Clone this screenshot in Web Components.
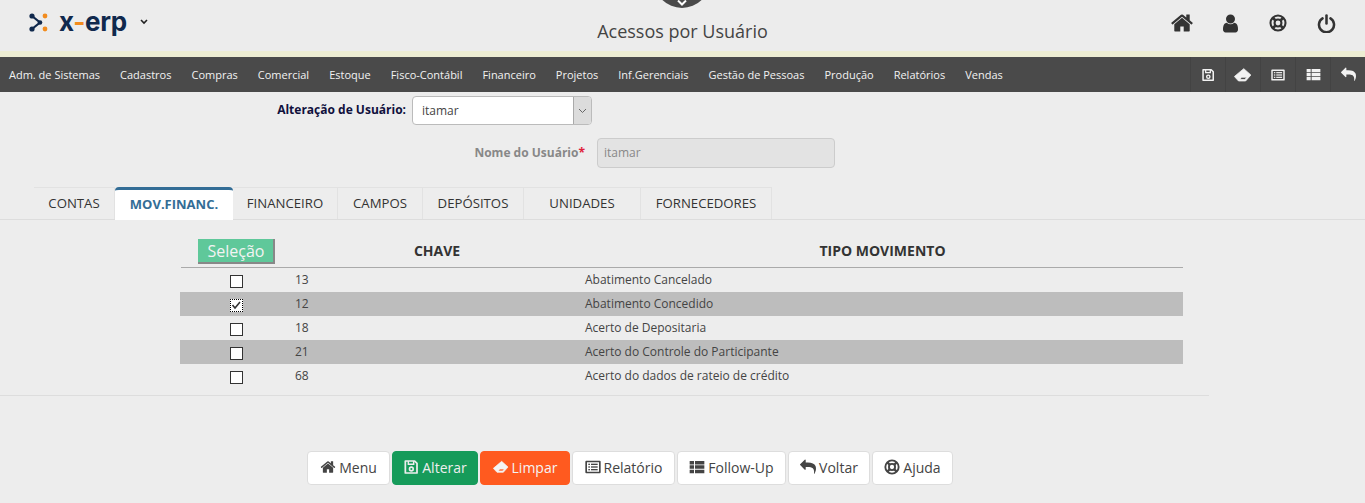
<!DOCTYPE html>
<html lang="pt-BR">
<head>
<meta charset="utf-8">
<title>Acessos por Usuário</title>
<style>
    html, body {
        margin: 0;
        padding: 0;
        background: #ededed;
        font-family: "Open Sans", "Liberation Sans", sans-serif;
        color: #444;
    }
</style>
</head>
<body>
<erp-header title-text="Acessos por Usuário"></erp-header>
<erp-menubar></erp-menubar>
<erp-form></erp-form>
<erp-tabs></erp-tabs>
<erp-grid></erp-grid>
<erp-actions></erp-actions>

<script>
const ICONS = {
    home: '<svg viewBox="0 0 1664 1792"><path fill="currentColor" d="M1408 992v480q0 26-19 45t-45 19h-384v-384h-256v384h-384q-26 0-45-19t-19-45v-480q0-1 .5-3t.5-3l575-474 575 474q1 2 1 6zm223-69l-62 74q-8 9-21 11h-3q-13 0-21-7l-692-577-692 577q-12 8-24 7-13-2-21-11l-62-74q-8-10-7-23.500t11-21.500l719-599q32-26 76-26t76 26l244 204v-195q0-14 9-23t23-9h192q14 0 23 9t9 23v408l219 182q10 8 11 21.500t-7 23.500z"/></svg>',
    user: '<svg viewBox="0 0 1792 1792"><path fill="currentColor" d="M1536 1399q0 109-62.500 187t-150.500 78h-854q-88 0-150.500-78t-62.500-187q0-85 8.500-160.500t31.500-152 58.500-131 94-89 134.500-34.500q131 128 313 128t313-128q76 0 134.500 34.500t94 89 58.500 131 31.500 152 8.500 160.500zm-256-887q0 159-112.500 271.500t-271.500 112.500-271.500-112.500-112.500-271.500 112.500-271.500 271.500-112.500 271.500 112.500 112.500 271.500z"/></svg>',
    ring: '<svg viewBox="0 0 24 24" fill="none" stroke="currentColor"><circle cx="12" cy="12" r="10" stroke-width="2.8"/><circle cx="12" cy="12" r="4.6" stroke-width="2.8"/><path stroke-width="3.600" d="M5 5l4 4M19 5l-4 4M5 19l4-4M19 19l-4-4"/></svg>',
    power: '<svg viewBox="0 0 24 24" fill="none" stroke="currentColor" stroke-width="3.200" stroke-linecap="round"><path d="M7 5.500a9.500 9.500 0 1 0 10 0"/><path d="M12 2v10"/></svg>',
    save: '<svg viewBox="0 0 24 24" fill="none" stroke="currentColor" stroke-width="2.600"><path d="M3.500 3h14l3.500 3.500v14.500h-17.500z" stroke-linejoin="round"/><path d="M8 3v5h8v-5" stroke-width="2.200"/><circle cx="12.500" cy="15" r="2.800" stroke-width="2.400"/></svg>',
    eraser: '<svg viewBox="0 0 24 24"><path fill="currentColor" fill-rule="evenodd" stroke="currentColor" stroke-width="1" stroke-linejoin="round" d="M13 3.500l9.500 8.500-7 8h-9.500l-5.500-6zM10 15l-2 3h6.500l2.500-3z"/></svg>',
    list: '<svg viewBox="0 0 24 24" fill="currentColor"><path fill-rule="evenodd" d="M2 2.500h20a1.500 1.500 0 0 1 1.500 1.500v16a1.500 1.500 0 0 1-1.500 1.500h-20a1.500 1.500 0 0 1-1.500-1.500v-16a1.500 1.500 0 0 1 1.500-1.500zM3 5v14h18v-14z"/><rect x="5" y="7" width="2.400" height="2"/><rect x="5" y="11" width="2.400" height="2"/><rect x="5" y="15" width="2.400" height="2"/><rect x="9" y="7" width="10" height="2"/><rect x="9" y="11" width="10" height="2"/><rect x="9" y="15" width="10" height="2"/></svg>',
    table: '<svg viewBox="0 0 24 24" fill="currentColor"><path d="M1 3h6.500v5.200h-6.500zM9 3h14v5.200h-14zM1 9.500h6.500v5.200h-6.500zM9 9.500h14v5.200h-14zM1 16h6.500v5.200h-6.500zM9 16h14v5.200h-14z"/></svg>',
    reply: '<svg viewBox="0 0 1792 1792"><path fill="currentColor" d="M1792 1120q0 166-127 451-3 7-10.500 24t-13.500 30-13 22q-12 17-28 17-15 0-23.500-10t-8.500-25q0-9 2.500-26.500t2.500-23.500q5-68 5-123 0-101-17.500-181t-48.500-138.500-80-101-105.500-69.500-133-42.500-154-21.500-175.500-6h-224v256q0 26-19 45t-45 19-45-19l-512-512q-19-19-19-45t19-45l512-512q19-19 45-19t45 19 19 45v256h224q713 0 875 403 53 134 53 333z"/></svg>'
};

class ErpIcon extends HTMLElement {
    connectedCallback() {
        const size = this.getAttribute('size') || 14;
        this.attachShadow({mode: 'open'}).innerHTML = `
<style>
    :host { display: inline-flex; width: ${size}px; height: ${size}px; align-items: center; justify-content: center; }
    svg { width: 100%; height: 100%; display: block; }
</style>
${ICONS[this.getAttribute('name')] || ''}`;
    }
}
customElements.define('erp-icon', ErpIcon);

class ErpHeader extends HTMLElement {
    connectedCallback() {
        const title = this.getAttribute('title-text');
        this.attachShadow({mode: 'open'}).innerHTML = `
<style>
    :host { display: block; position: relative; background: #ececec; }
    .top {
        height: 51px;
        display: flex;
        align-items: flex-start;
        justify-content: space-between;
        box-sizing: border-box;
    }
    .logo { display: flex; align-items: center; margin: 9px 0 0 29px; height: 26px; }
    .word { font: 700 26px/26px Inter, Lato, sans-serif; color: #10294d; margin-left: 11px; letter-spacing: -.3px; }
    .word b { color: #f28c1e; font-weight: 700; }
    .caret { margin-left: 13px; }
    .title {
        position: absolute;
        left: 0; right: 0; top: 19px;
        text-align: center;
        font-size: 18px;
        line-height: 24px;
        color: #444;
    }
    .pull {
        position: absolute;
        left: 654px; top: -48px;
        width: 56px; height: 56px;
        border-radius: 50%;
        background: #4a4a4a;
    }
    .pull svg { position: absolute; left: 22px; top: 47px; }
    .icons { display: flex; margin: 11px 15px 0 0; color: #333; }
    .icons span { width: 48px; height: 24px; display: flex; justify-content: center; align-items: center; }
    .strip { height: 6px; background: #ededd3; }
</style>
<div class="top">
    <div class="logo">
        <svg width="19" height="19" viewBox="0 0 19 19">
            <path d="M3 3l8 6.500-8 6.500" fill="none" stroke="#10294d" stroke-width="2.200"/>
            <circle cx="3" cy="3" r="2.600" fill="#10294d"/>
            <circle cx="3" cy="16" r="2.600" fill="#10294d"/>
            <circle cx="11" cy="9.500" r="2.300" fill="#10294d"/>
            <circle cx="16" cy="3" r="2.400" fill="#f28c1e"/>
            <circle cx="16" cy="16" r="2.400" fill="#f28c1e"/>
        </svg>
        <span class="word">x<b>-</b>erp</span>
        <svg class="caret" width="8" height="6" viewBox="0 0 8 6"><path d="M1 1l3 3 3-3" fill="none" stroke="#222" stroke-width="1.600"/></svg>
    </div>
    <div class="icons">
        <span><erp-icon name="home" size="24"></erp-icon></span>
        <span><erp-icon name="user" size="21"></erp-icon></span>
        <span><erp-icon name="ring" size="18"></erp-icon></span>
        <span><erp-icon name="power" size="19"></erp-icon></span>
    </div>
</div>
<div class="pull"><svg width="12" height="8" viewBox="0 0 12 8"><path d="M2 1.500l4 4 4-4" fill="none" stroke="#fff" stroke-width="2"/></svg></div>
<div class="title">${title}</div>
<div class="strip"></div>`;
    }
}
customElements.define('erp-header', ErpHeader);

class ErpMenubar extends HTMLElement {
    connectedCallback() {
        const items = ['Adm. de Sistemas','Cadastros','Compras','Comercial','Estoque','Fisco-Contábil','Financeiro','Projetos','Inf.Gerenciais','Gestão de Pessoas','Produção','Relatórios','Vendas'];
        const tools = [['save',14],['eraser',18],['list',14],['table',15],['reply',15]];
        this.attachShadow({mode: 'open'}).innerHTML = `
<style>
    :host {
        display: flex;
        height: 35px;
        background: #4a4a4a;
        color: #f2f2f2;
        justify-content: space-between;
    }
    nav { display: flex; align-items: center; padding: 0 0 1px 9px; gap: 20px; font-size: 11px; font-weight: 500; }
    .tools { display: flex; }
    .tools span {
        width: 34px;
        display: flex;
        align-items: center;
        justify-content: center;
        border-left: 1px solid #434343;
    }
</style>
<nav>${items.map(i => `<span>${i}</span>`).join('')}</nav>
<div class="tools">${tools.map(t => `<span><erp-icon name="${t[0]}" size="${t[1]}"></erp-icon></span>`).join('')}</div>`;
    }
}
customElements.define('erp-menubar', ErpMenubar);

class ErpForm extends HTMLElement {
    connectedCallback() {
        this.attachShadow({mode: 'open'}).innerHTML = `
<style>
    :host { display: block; height: 95px; font-size: 12px; margin-bottom: -4px; }
    .row { display: flex; align-items: center; }
    .one { height: 29px; margin-top: 4px; }
    .two { height: 30px; margin-top: 13px; }
    label { text-align: right; font-weight: 700; padding-bottom: 2px; }
    .one label { width: 406px; color: #10103c; }
    .two label { width: 585px; color: #888; }
    .two i { color: #e0203a; font-style: normal; }
    .select {
        margin-left: 6px;
        width: 180px;
        height: 29px;
        box-sizing: border-box;
        background: #fff;
        border: 1px solid #bbb;
        border-radius: 4px;
        display: flex;
        align-items: center;
        justify-content: space-between;
        padding-left: 9px;
        color: #444;
        overflow: hidden;
    }
    .select span { padding-bottom: 1px; }
    .select div {
        width: 17px;
        height: 100%;
        background: #dcdcdc;
        border-left: 1px solid #aaa;
        display: flex;
        align-items: center;
        justify-content: center;
    }
    .input {
        margin-left: 12px;
        width: 238px;
        height: 30px;
        box-sizing: border-box;
        background: #e3e3e3;
        border: 1px solid #ccc;
        border-radius: 4px;
        padding: 0 0 2px 6px;
        display: flex;
        align-items: center;
        color: #888;
    }
</style>
<div class="row one">
    <label>Alteração de Usuário:</label>
    <div class="select"><span>itamar</span><div><svg width="9" height="6" viewBox="0 0 9 6"><path d="M1 1l3.500 3.500 3.500-3.500" fill="none" stroke="#666"/></svg></div></div>
</div>
<div class="row two">
    <label>Nome do Usuário<i>*</i></label>
    <div class="input">itamar</div>
</div>`;
    }
}
customElements.define('erp-form', ErpForm);

class ErpTabs extends HTMLElement {
    connectedCallback() {
        const tabs = [['CONTAS',81],['MOV.FINANC.',118,1],['FINANCEIRO',105],['CAMPOS',85],['DEPÓSITOS',101],['UNIDADES',117],['FORNECEDORES',131]];
        this.attachShadow({mode: 'open'}).innerHTML = `
<style>
    :host {
        display: flex;
        height: 33px;
        box-sizing: border-box;
        padding-left: 34px;
        border-bottom: 1px solid #ddd;
        font-size: 13.200px;
    }
    div {
        box-sizing: border-box;
        height: 32px;
        display: flex;
        align-items: center;
        justify-content: center;
        color: #333;
        border-top: 1px solid #e2e2e2;
        border-right: 1px solid #e2e2e2;
        padding-bottom: 1px;
    }
    .on {
        background: #fff;
        border-top: 3px solid #336d96;
        border-right: 0;
        border-radius: 4px 4px 0 0;
        color: #336d96;
        font-weight: 700;
        font-size: 13px;
        height: 33px;
        padding-bottom: 2px;
    }
</style>
${tabs.map(t => `<div class="${t[2] ? 'on' : ''}" style="width:${t[1]}px">${t[0]}</div>`).join('')}`;
    }
}
customElements.define('erp-tabs', ErpTabs);

class ErpCheck extends HTMLElement {
    connectedCallback() {
        const checked = this.hasAttribute('checked');
        this.attachShadow({mode: 'open'}).innerHTML = `
<style>
    :host { display: block; width: 13px; height: 13px; box-sizing: border-box; background: #fff; border: 1px ${checked ? 'dotted #000' : 'solid #333'}; }
    svg { display: block; }
</style>
${checked ? '<svg width="11" height="11" viewBox="0 0 11 11"><path d="M1.500 5l2.500 3 5-6" fill="none" stroke="#333" stroke-width="1.600"/></svg>' : ''}`;
    }
}
customElements.define('erp-check', ErpCheck);

class ErpGrid extends HTMLElement {
    connectedCallback() {
        const rows = [[13,'Abatimento Cancelado'],[12,'Abatimento Concedido',1],[18,'Acerto de Depositaria'],[21,'Acerto do Controle do Participante'],[68,'Acerto do dados de rateio de crédito']];
        this.attachShadow({mode: 'open'}).innerHTML = `
<style>
    :host { display: block; height: 176px; box-sizing: border-box; width: 1209px; border-bottom: 1px solid #ddd; padding: 19px 0 0 180px; }
    .table { width: 1003px; }
    .head, .row { display: grid; grid-template-columns: 112px 290px 1fr; }
    .head {
        height: 28px;
        margin-left: 1px;
        border-bottom: 1px solid #aaa;
        align-items: start;
        font-size: 14px;
        line-height: 24px;
        font-weight: 700;
        color: #333;
        text-align: center;
        grid-template-columns: 111px 290px 1fr;
    }
    button {
        display: block;
        margin-left: 17px;
        width: 77px;
        height: 25px;
        padding: 0 0 0 1px;
        border: 0;
        border-right: 2px solid #888;
        border-bottom: 2px solid #888;
        background: #5fc89a;
        color: #f3f3f3;
        font: 400 16px/22px "Open Sans", sans-serif;
    }
    .row { height: 24px; align-items: center; font-size: 12px; color: #444; }
    .row:nth-child(even) { background: #bdbdbd; }
    .row .c { display: flex; justify-content: center; padding: 3px 0 0 1px; }
    .row:nth-child(4) .c { padding-left: 0; }
    .row span { padding: 0 0 2px 3px; }
</style>
<div class="table">
    <div class="head"><div style="text-align:left"><button>Seleção</button></div><div>CHAVE</div><div>TIPO MOVIMENTO</div></div>
    <div class="body">
        ${rows.map(r => `<div class="row"><div class="c"><erp-check ${r[2] ? 'checked' : ''}></erp-check></div><span>${r[0]}</span><span>${r[1]}</span></div>`).join('')}
    </div>
</div>`;
    }
}
customElements.define('erp-grid', ErpGrid);

class ErpActions extends HTMLElement {
    connectedCallback() {
        const btns = [['home','Menu',83],['save','Alterar',86,'g'],['eraser','Limpar',90,'o'],['list','Relatório',103],['table','Follow-Up',109],['reply','Voltar',82],['ring','Ajuda',81]];
        this.attachShadow({mode: 'open'}).innerHTML = `
<style>
    :host { display: flex; justify-content: center; gap: 2px; width: 1260px; padding-top: 55px; font-size: 14px; }
    div {
        box-sizing: border-box;
        height: 34px;
        display: flex;
        align-items: center;
        justify-content: center;
        gap: 3px;
        background: #fff;
        border: 1px solid #ddd;
        border-radius: 4px;
        color: #444;
        padding-bottom: 2px;
    }
    .g { background: #169b5a; border-color: #169b5a; color: #eee; }
    .o { background: #ff5a1f; border-color: #ff5a1f; color: #f4f4f4; }
</style>
${btns.map(b => `<div class="${b[3] || ''}" style="width:${b[2]}px"><erp-icon name="${b[0]}" size="16"></erp-icon><span>${b[1]}</span></div>`).join('')}`;
    }
}
customElements.define('erp-actions', ErpActions);
</script>
</body>
</html>
